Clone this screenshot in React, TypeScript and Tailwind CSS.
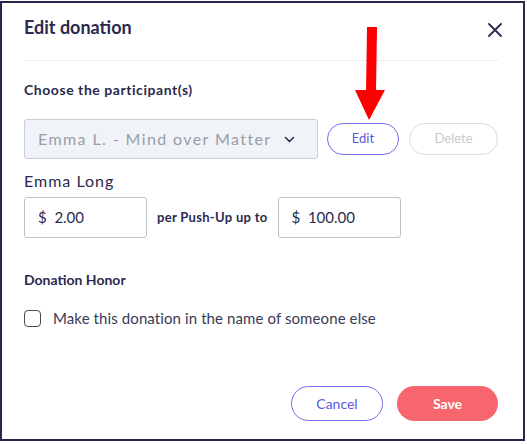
import React, { useState } from 'react';

const font = { fontFamily: 'Lato, "Noto Sans", sans-serif' };

export default function App() {
  const [honor, setHonor] = useState(false);

  return (
    <div className="bg-white w-[527px] h-[444px]" style={font}>
      <div className="relative mt-px w-[525px] h-[440px] border-2 border-[#29284c] bg-white flex flex-col pl-[22px] pr-[25px]">
        {/* Header */}
        <div className="flex items-start justify-between pt-[12px] pb-[21px]">
          <h2 className="text-[18px] leading-[24px] font-bold text-[#2b2a4e]">Edit donation</h2>
          <button className="mt-[8px] -mr-[4px] text-[#2b2a4e]">
            <svg width="14" height="14" viewBox="0 0 14 14" fill="none" stroke="currentColor" strokeWidth="1.8" strokeLinecap="round">
              <path d="M1 1L13 13M13 1L1 13" />
            </svg>
          </button>
        </div>
        <div className="h-px bg-[#ececf1]" />

        {/* Participant */}
        <div className="mt-[19px] text-[14px] leading-[20px] font-bold tracking-[0.55px] text-[#2b2a4e]">Choose the participant(s)</div>
        <div className="mt-[19px] flex items-center">
          <div className="w-[294px] h-[40px] rounded-[3px] border border-[#c8ced7] bg-[#f0f3f8] flex items-center justify-between pl-[13px] pr-[22px]">
            <span className="text-[16px] tracking-[1.4px] text-[#9b9ca4]">Emma L. - Mind over Matter</span>
            <svg width="11" height="7" viewBox="0 0 11 7" fill="none" stroke="#2b2a4e" strokeWidth="1.6" strokeLinecap="round" strokeLinejoin="round">
              <path d="M1.5 1.5L5.5 5.5L9.5 1.5" />
            </svg>
          </div>
          <button className="ml-[9px] w-[72px] h-[32px] rounded-full border border-[#6f6ef0] text-[13px] text-[#5b58e0]">Edit</button>
          <button className="ml-[10px] w-[89px] h-[32px] rounded-full border border-[#dcdce1] text-[13px] text-[#cacace]">Delete</button>
        </div>

        {/* Amounts */}
        <div className="mt-[12px] text-[16px] leading-[20px] tracking-[1px] text-[#2b2a4e]">Emma Long</div>
        <div className="mt-[6px] flex items-center gap-[10px]">
          <div className="w-[123px] h-[41px] rounded-[3px] border border-[#bcc3ce] flex items-center pl-[13px] text-[15px] text-[#2b2a4e]">$&nbsp;&nbsp;2.00</div>
          <span className="text-[13px] font-bold tracking-[0.3px] text-[#2b2a4e]">per Push-Up up to</span>
          <div className="w-[123px] h-[41px] rounded-[3px] border border-[#bcc3ce] flex items-center pl-[13px] text-[15px] text-[#2b2a4e]">$&nbsp;&nbsp;100.00</div>
        </div>

        {/* Honor */}
        <div className="mt-[32px] text-[14px] leading-[20px] font-bold text-[#2b2a4e]">Donation Honor</div>
        <label className="mt-[20px] flex items-center gap-[12px] cursor-pointer">
          <input type="checkbox" checked={honor} onChange={() => setHonor(!honor)} className="sr-only" />
          <span className="w-[17px] h-[17px] rounded-[4px] border-[1.5px] border-[#4b4a5c] bg-white" />
          <span className="text-[15px] leading-[17px] tracking-[0.1px] text-[#3a3956]">Make this donation in the name of someone else</span>
        </label>

        {/* Footer */}
        <div className="mt-auto mb-[18px] flex justify-end gap-[14px]">
          <button className="w-[92px] h-[35px] rounded-full border border-[#6f6ef0] text-[14px] text-[#5b58e0]">Cancel</button>
          <button className="w-[101px] h-[35px] rounded-full bg-[#f7666c] text-[14px] font-bold text-white">Save</button>
        </div>

        {/* Annotation arrow */}
        <svg className="absolute left-[352px] top-[23px]" width="32" height="96" viewBox="0 0 32 96">
          <polygon points="13,1 23,1 22,65 12,65" fill="#ff0000" />
          <polygon points="1,64 31,64 15,94" fill="#ff0000" />
        </svg>
      </div>
    </div>
  );
}
